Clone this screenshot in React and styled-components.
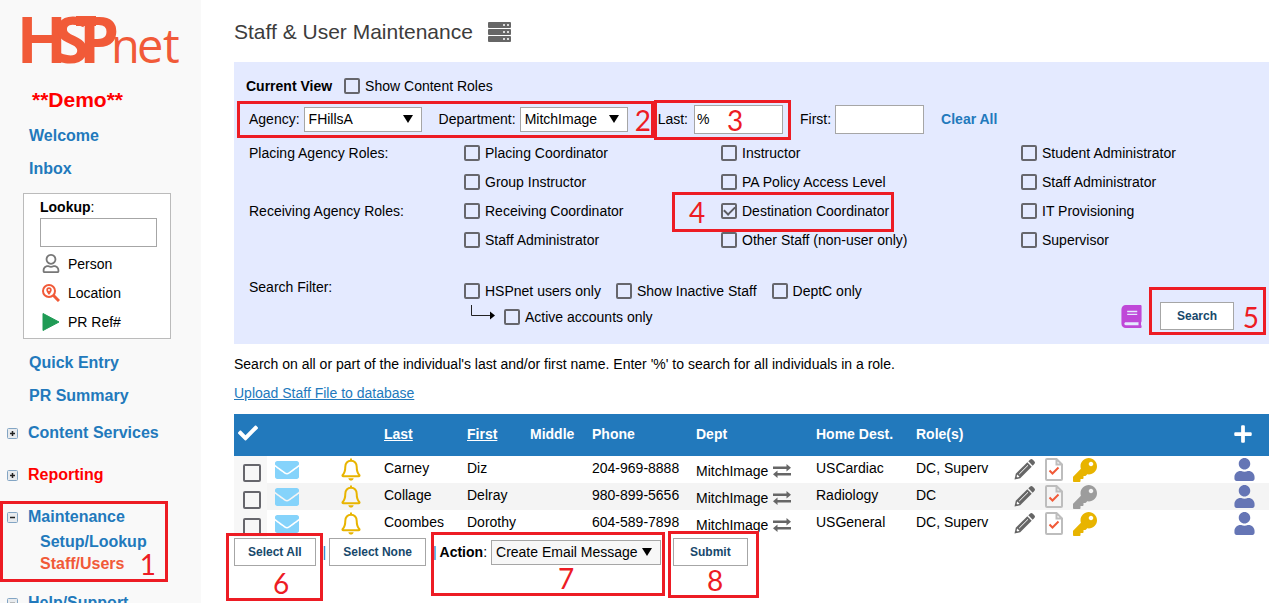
import styled, { createGlobalStyle } from "styled-components";
import { FaBook, FaCheck, FaEnvelope, FaKey, FaPlus, FaRegUser, FaUser } from "react-icons/fa";

const GlobalStyle = createGlobalStyle`
  :root {
    --blue: #2279bc;
    --orange: #f15a38;
    --mark: #ed1c24;
    --panel: #e4eaff;
    --line: #a6a6a6;
    --text-sm: 12px;
    --text-md: 14px;
    --text-nav: 16px;
  }

  * {
    box-sizing: border-box;
  }

  body {
    margin: 0;
    overflow: hidden;
    background: #fff;
    color: #000;
    font-family: "Liberation Sans", Arial, sans-serif;
    font-size: var(--text-md);
  }

  input,
  select,
  button {
    font: inherit;
    color: inherit;
    margin: 0;
  }

  svg {
    display: block;
    flex: none;
  }
`;

const Page = styled.div`
  position: relative;
  display: grid;
  grid-template-columns: 201px 1fr;
  height: 100vh;
  overflow: hidden;
`;

/* ---------- sidebar ---------- */

const Sidebar = styled.aside`
  background: #f9f9f9;
  overflow: hidden;
`;

const Demo = styled.p`
  margin: 8px 0 7px 32px;
  font-size: 21px;
  font-weight: bold;
  line-height: 24px;
  color: #f00;
`;

const NavLink = styled.a`
  display: block;
  padding-left: 29px;
  font-size: var(--text-nav);
  font-weight: bold;
  line-height: 33px;
  text-decoration: none;
  color: var(--blue);
`;

const LookupBox = styled.section`
  width: 148px;
  height: 146px;
  margin: 8px 0 7px 23px;
  padding: 4px 13px 0 16px;
  border: 1px solid #bbb;
  background: #fff;
`;

const LookupLabel = styled.label`
  display: block;
  margin-bottom: 2px;
  line-height: 18px;
`;

const TextInput = styled.input`
  width: ${(props) => props.$width};
  height: 29px;
  padding: 0 2px;
  border: 1px solid var(--line);
  border-radius: 0;
  background: #fff;
`;

const LookupList = styled.ul`
  margin: 2px 0 0;
  padding: 0;
  list-style: none;
`;

const LookupItem = styled.li`
  display: flex;
  align-items: center;
  gap: 8px;
  height: 29px;
  padding-left: 2px;

  svg {
    width: 18px;
  }
`;

const Tree = styled.ul`
  display: flex;
  flex-direction: column;
  gap: 20px;
  margin: 10px 0 0;
  padding: 0;
  list-style: none;
`;

const TreeRow = styled.div`
  display: flex;
  align-items: center;
  gap: 10px;
  padding-left: 7px;
`;

const TreeLink = styled.a`
  display: block;
  font-size: var(--text-nav);
  font-weight: bold;
  line-height: 22px;
  text-decoration: none;
  color: ${(props) => props.$color || "var(--blue)"};
`;

const SubTree = styled.ul`
  margin: 3px 0 -3px;
  padding-left: 40px;
  list-style: none;
`;

/* ---------- main column ---------- */

const Main = styled.main`
  min-width: 0;
  padding: 18px 10px 0 33px;
`;

const TitleRow = styled.header`
  display: flex;
  align-items: center;
  gap: 15px;
  height: 27px;
  margin-bottom: 17px;
`;

const Title = styled.h1`
  margin: 0;
  font-size: 21px;
  font-weight: normal;
  line-height: 27px;
  color: #3c3c3c;
`;

const Panel = styled.form`
  height: 282px;
  padding: 9px 0 0 12px;
  background: var(--panel);
`;

const PanelRow = styled.div`
  display: flex;
  align-items: center;
  height: ${(props) => props.$height || "29px"};
  gap: ${(props) => props.$gap || "0"};
  padding-left: ${(props) => props.$indent || "0"};
`;

const Field = styled.label`
  display: flex;
  align-items: center;
  gap: 4px;
`;

const NameField = styled(Field)`
  gap: 6px;
  margin-left: 13px;
`;

const SelectWrap = styled.span`
  position: relative;
  display: block;
  width: ${(props) => props.$width};

  &::after {
    content: "";
    position: absolute;
    top: 8px;
    right: 9px;
    border-top: 8px solid #000;
    border-left: 5px solid transparent;
    border-right: 5px solid transparent;
    pointer-events: none;
  }
`;

const SelectInput = styled.select`
  appearance: none;
  display: block;
  width: 100%;
  height: 25px;
  padding: 0 4px;
  border: 1px solid var(--line);
  border-radius: 0;
  background: ${(props) => props.$background || "#fff"};
`;

const CheckInput = styled.input`
  appearance: none;
  flex: none;
  display: grid;
  place-items: center;
  width: ${(props) => props.$size || "16px"};
  height: ${(props) => props.$size || "16px"};
  border: 2px solid #66666c;
  border-radius: 2px;

  &:checked::after {
    content: "";
    width: 9px;
    height: 5px;
    margin-bottom: 3px;
    border-left: 2px solid #5c5c62;
    border-bottom: 2px solid #5c5c62;
    transform: rotate(-45deg);
  }
`;

const CheckLabel = styled.label`
  display: flex;
  align-items: center;
  gap: 5px;
  line-height: 18px;
`;

const RoleGrid = styled.div`
  display: grid;
  grid-template-columns: 215px 257fr 300fr 248fr;
  grid-auto-rows: 29px;
  align-items: center;
  padding-left: 3px;
`;

const FilterRow = styled.div`
  display: grid;
  grid-template-columns: 215px 1fr auto;
  align-items: start;
  margin-top: 25px;
  padding: 0 35px 0 3px;
`;

const FilterChecks = styled.div`
  padding-top: 3px;
`;

const FilterActions = styled.div`
  display: flex;
  align-items: center;
  gap: 17px;
  padding-top: 23px;
`;

const Button = styled.button`
  height: 28px;
  padding: 0 ${(props) => props.$pad || "13px"};
  border: 1px solid var(--line);
  border-radius: 0;
  background: #fff;
  color: #17486b;
  font-size: var(--text-sm);
  font-weight: bold;
`;

const ClearLink = styled.a`
  font-weight: bold;
  text-decoration: none;
  color: var(--blue);
`;

const Hint = styled.p`
  margin: 10px 0;
  line-height: 20px;
`;

const UploadLink = styled.a`
  display: block;
  width: fit-content;
  line-height: 19px;
  color: var(--blue);
`;

/* ---------- staff table ---------- */

const Table = styled.table`
  width: 100%;
  margin-top: 11px;
  border-collapse: collapse;
  table-layout: fixed;

  th,
  td {
    padding: 0;
    text-align: left;
    white-space: nowrap;
  }

  th {
    height: 42px;
    padding-bottom: 2px;
    background: var(--blue);
    color: #fff;
    line-height: 20px;
  }

  td {
    height: 27px;
    vertical-align: top;
    line-height: 25px;
  }

  tbody tr:nth-child(even) {
    background: #f4f4f4;
  }
`;

const Col = styled.col`
  width: ${(props) => props.$width || "auto"};
`;

const CheckHead = styled.th`
  && {
    padding: 0 0 5px 4px;
  }
`;

const CheckCell = styled.td`
  && {
    padding: 8px 0 0 9px;
    height: 27px;
    line-height: 0;
    background: linear-gradient(to right, #f7f7f7 33px, transparent 33px);
  }
`;

const SortLink = styled.a`
  color: inherit;
`;

const IconSet = styled.div`
  display: flex;
  align-items: center;
  gap: 10px;
  height: 27px;
`;

const DeptCell = styled.div`
  display: flex;
  align-items: center;
  gap: 5px;
  padding-top: 3px;
  line-height: 24px;
`;

const Footer = styled.footer`
  display: flex;
  align-items: center;
  height: 28px;
  margin-top: 1px;
`;

const Bar = styled.span`
  margin: 0 3px 0 7px;
  color: var(--blue);
`;

const ActionField = styled(Field)`
  margin-right: 12px;
`;

/* ---------- numbered callouts ---------- */

const Callout = styled.div`
  position: absolute;
  top: ${(props) => props.$top}px;
  left: ${(props) => (props.$right ? "auto" : `${props.$left}px`)};
  right: ${(props) => (props.$right ? `${props.$right}px` : "auto")};
  display: flex;
  justify-content: ${(props) => (props.$end ? "flex-end" : "flex-start")};
  align-items: ${(props) => (props.$low ? "flex-end" : "center")};
  width: ${(props) => props.$width}px;
  height: ${(props) => props.$height}px;
  padding-left: ${(props) => (props.$end ? 0 : props.$pad)}px;
  padding-right: ${(props) => (props.$end ? props.$pad : 0)}px;
  border: 3px solid var(--mark);
  color: var(--mark);
  font-family: Lato, sans-serif;
  font-size: 28px;
  line-height: 30px;
  pointer-events: none;
`;

const callouts = [
  { n: 1, top: 501, left: 0, width: 168, height: 81, pad: 9, end: true, low: true },
  { n: 2, top: 101, left: 237, width: 417, height: 37, pad: 0, end: true },
  { n: 3, top: 100, left: 654, width: 137, height: 40, pad: 70 },
  { n: 4, top: 192, left: 672, width: 222, height: 40, pad: 14 },
  { n: 5, top: 287, right: 13, width: 117, height: 48, pad: 4, end: true, low: true },
  { n: 6, top: 533, left: 226, width: 97, height: 68, pad: 44, low: true },
  { n: 7, top: 532, left: 431, width: 234, height: 64, pad: 124, low: true },
  { n: 8, top: 531, left: 668, width: 91, height: 67, pad: 36, low: true },
];

const Logo = () => (
  <svg width="201" height="80" viewBox="0 0 201 80" fill="#f15a38" role="img" aria-label="HSPnet">
    <rect x="76" y="16" width="20" height="10" />
    <text x="18" y="63" fontFamily="Liberation Sans, Arial, sans-serif" fontWeight="bold" fontSize="66">
      H<tspan x="54 79" fontFamily="Open Sans, sans-serif" fontSize="64">SP</tspan>
    </text>
    <text x="111 137 163" y="63" fontFamily="Open Sans, sans-serif" fontSize="47">
      net
    </text>
  </svg>
);

const ServerIcon = () => (
  <svg width="23" height="22" viewBox="0 0 23 22">
    {[0, 7, 14].map((y) => (
      <g key={y}>
        <rect y={y + 1} width="23" height="6" rx="1" fill="#666" />
        <circle cx="16" cy={y + 4} r="1" fill="#fff" />
        <circle cx="20" cy={y + 4} r="1" fill="#fff" />
      </g>
    ))}
  </svg>
);

const SearchPinIcon = () => (
  <svg width="18" height="18" viewBox="0 0 18 18" fill="none" stroke="#f15a38">
    <circle cx="7" cy="7" r="6" strokeWidth="2" />
    <path d="M11.5 11.5 17 17" strokeWidth="3" />
    <path
      d="M7 11C5.200 8.600 4.300 7.300 4.300 6a2.700 2.700 0 0 1 5.400 0C9.700 7.300 8.800 8.600 7 11zM7 5a1 1 0 1 0 0 2 1 1 0 0 0 0-2z"
      fill="#f15a38"
      fillRule="evenodd"
      stroke="none"
    />
  </svg>
);

const PlayIcon = () => (
  <svg width="18" height="18" viewBox="0 0 18 18">
    <path d="M1 0.500 17 9 1 17.500z" fill="#1f9b55" stroke="#1f9b55" strokeLinejoin="round" />
  </svg>
);

const TreeToggle = ({ open }) => (
  <svg width="11" height="11" viewBox="0 0 11 11">
    <rect x="0.500" y="0.500" width="10" height="10" rx="1" fill="#e8ebee" stroke="#83a5c4" />
    <path d={open ? "M3 5.500h5" : "M3 5.500h5M5.500 3v5"} stroke="#222" strokeWidth="1.500" />
  </svg>
);

const ElbowArrow = () => (
  <svg width="25" height="26" viewBox="0 0 25 26">
    <path d="M1.500 1v10.500H21" fill="none" stroke="#222" />
    <path d="M20 7.500 25 11.500 20 15.500z" fill="#000" />
  </svg>
);

const BellIcon = () => (
  <svg width="20" height="23" viewBox="0 0 20 23" fill="none" stroke="#e8b400">
    <path
      d="M10 2.800c-3.600 0-5.700 2.600-5.700 6 0 4.700-1 6.600-2.600 8.200-.5.600-.2 1.300.6 1.300h15.400c.8 0 1.100-.7.6-1.300-1.600-1.600-2.600-3.500-2.600-8.200 0-3.400-2.100-6-5.700-6z"
      strokeWidth="2"
    />
    <path d="M10 0.500v2.500" strokeWidth="2" />
    <path d="M7.300 20.300h5.400c-.4 1.500-1.400 2.300-2.700 2.300s-2.300-.8-2.700-2.300z" fill="#e8b400" stroke="none" />
  </svg>
);

const PencilIcon = () => (
  <svg width="21" height="21" viewBox="0 0 21 21">
    <path d="M14.300 2.300 16 .7a2 2 0 0 1 2.800 0l1.500 1.500a2 2 0 0 1 0 2.800l-1.600 1.700z" fill="#666" />
    <path d="M13.300 3.300 17.700 7.700 6.200 19.200 0.500 20.500 1.800 14.800z" fill="#666" />
    <path d="M3.200 15.500 5.500 17.800 3.600 18.400 2.600 17.400z" fill="#fff" />
    <path d="M14 6.300 5.200 15.100" stroke="#fff" />
  </svg>
);

const SwapIcon = () => (
  <svg width="18" height="14" viewBox="0 0 18 14" fill="#666">
    <path d="M0 2.500h13.500V0L18 3.800 13.500 7.500V5H0zM18 9H4.500V6.500L0 10.300 4.500 14v-2.500H18z" />
  </svg>
);

const FileCheckIcon = () => (
  <svg width="18" height="23" viewBox="0 0 18 23" fill="none">
    <path
      d="M2 1h9.500L17 6.500V21a1 1 0 0 1-1 1H2a1 1 0 0 1-1-1V2a1 1 0 0 1 1-1zM11.500 1v5.500H17"
      stroke="#bdbdbd"
      strokeWidth="2"
    />
    <path d="m4.500 12.500 3 3 6-6" stroke="#f15a38" strokeWidth="2" />
  </svg>
);

const Select = ({ width, value, background }) => (
  <SelectWrap $width={width}>
    <SelectInput defaultValue={value} $background={background}>
      <option>{value}</option>
    </SelectInput>
  </SelectWrap>
);

const Check = ({ label, checked }) => (
  <CheckLabel>
    <CheckInput type="checkbox" defaultChecked={checked} />
    {label}
  </CheckLabel>
);

const roleRows = [
  ["Placing Agency Roles:", "Placing Coordinator", "Instructor", "Student Administrator"],
  ["", "Group Instructor", "PA Policy Access Level", "Staff Administrator"],
  ["Receiving Agency Roles:", "Receiving Coordinator", "Destination Coordinator", "IT Provisioning"],
  ["", "Staff Administrator", "Other Staff (non-user only)", "Supervisor"],
];

const staff = [
  { last: "Carney", first: "Diz", phone: "204-969-8888", dest: "USCardiac", roles: "DC, Superv", active: true },
  { last: "Collage", first: "Delray", phone: "980-899-5656", dest: "Radiology", roles: "DC", active: false },
  { last: "Coombes", first: "Dorothy", phone: "604-589-7898", dest: "USGeneral", roles: "DC, Superv", active: true },
];

const columns = ["41px", "66px", "43px", "83px", "63px", "62px", "104px", "120px", "100px", "98px", "", "36px"];

const SideNav = () => (
  <Sidebar>
    <Logo />
    <Demo>**Demo**</Demo>
    <NavLink href="#welcome">Welcome</NavLink>
    <NavLink href="#inbox">Inbox</NavLink>
    <LookupBox>
      <LookupLabel htmlFor="lookup">
        <b>Lookup</b>:
      </LookupLabel>
      <TextInput id="lookup" type="text" $width="117px" />
      <LookupList>
        <LookupItem>
          <FaRegUser size={19} color="#777" />
          Person
        </LookupItem>
        <LookupItem>
          <SearchPinIcon />
          Location
        </LookupItem>
        <LookupItem>
          <PlayIcon />
          PR Ref#
        </LookupItem>
      </LookupList>
    </LookupBox>
    <NavLink href="#quick">Quick Entry</NavLink>
    <NavLink href="#summary">PR Summary</NavLink>
    <Tree>
      <li>
        <TreeRow>
          <TreeToggle />
          <TreeLink href="#content">Content Services</TreeLink>
        </TreeRow>
      </li>
      <li>
        <TreeRow>
          <TreeToggle />
          <TreeLink href="#reporting" $color="#f00">Reporting</TreeLink>
        </TreeRow>
      </li>
      <li>
        <TreeRow>
          <TreeToggle open />
          <TreeLink href="#maintenance">Maintenance</TreeLink>
        </TreeRow>
        <SubTree>
          <li>
            <TreeLink href="#setup">Setup/Lookup</TreeLink>
          </li>
          <li>
            <TreeLink href="#staff" $color="var(--orange)">Staff/Users</TreeLink>
          </li>
        </SubTree>
      </li>
      <li>
        <TreeRow>
          <TreeToggle open />
          <TreeLink href="#help">Help/Support</TreeLink>
        </TreeRow>
      </li>
    </Tree>
  </Sidebar>
);

const SearchPanel = () => (
  <Panel onSubmit={(e) => e.preventDefault()}>
    <PanelRow $gap="12px">
      <b>Current View</b>
      <Check label="Show Content Roles" />
    </PanelRow>
    <PanelRow $height="38px" $gap="17px" $indent="3px">
      <Field>
        Agency:
        <Select width="118px" value="FHillsA" />
      </Field>
      <Field>
        Department:
        <Select width="108px" value="MitchImage" />
      </Field>
      <NameField>
        Last:
        <TextInput type="text" defaultValue="%" $width="89px" />
      </NameField>
      <Field>
        First:
        <TextInput type="text" $width="89px" />
      </Field>
      <ClearLink href="#clear">Clear All</ClearLink>
    </PanelRow>
    <RoleGrid>
      {roleRows.map(([heading, ...roles], i) => [
        <span key={`h${i}`}>{heading}</span>,
        ...roles.map((role) => (
          <Check key={`${i}${role}`} label={role} checked={role === "Destination Coordinator"} />
        )),
      ])}
    </RoleGrid>
    <FilterRow>
      <span>Search Filter:</span>
      <FilterChecks>
        <PanelRow $height="18px" $gap="15px">
          <Check label="HSPnet users only" />
          <Check label="Show Inactive Staff" />
          <Check label="DeptC only" />
        </PanelRow>
        <PanelRow $height="34px" $gap="9px" $indent="6px">
          <ElbowArrow />
          <Check label="Active accounts only" />
        </PanelRow>
      </FilterChecks>
      <FilterActions>
        <FaBook size={23} color="#bf48d8" />
        <Button type="submit" $pad="16px">Search</Button>
      </FilterActions>
    </FilterRow>
  </Panel>
);

const StaffTable = () => (
  <Table>
    <colgroup>
      {columns.map((width, i) => (
        <Col key={i} $width={width} />
      ))}
    </colgroup>
    <thead>
      <tr>
        <CheckHead>
          <FaCheck size={20} aria-label="Selected" />
        </CheckHead>
        <th />
        <th />
        <th>
          <SortLink href="#last">Last</SortLink>
        </th>
        <th>
          <SortLink href="#first">First</SortLink>
        </th>
        <th>Middle</th>
        <th>Phone</th>
        <th>Dept</th>
        <th>Home Dest.</th>
        <th>Role(s)</th>
        <th />
        <th>
          <FaPlus size={20} aria-label="Add" />
        </th>
      </tr>
    </thead>
    <tbody>
      {staff.map((person) => (
        <tr key={person.last}>
          <CheckCell>
            <CheckInput type="checkbox" $size="18px" aria-label={`Select ${person.last}`} />
          </CheckCell>
          <td>
            <IconSet>
              <FaEnvelope size={24} color="#85d3fb" />
            </IconSet>
          </td>
          <td>
            <IconSet>
              <BellIcon />
            </IconSet>
          </td>
          <td>{person.last}</td>
          <td>{person.first}</td>
          <td />
          <td>{person.phone}</td>
          <td>
            <DeptCell>
              MitchImage
              <SwapIcon />
            </DeptCell>
          </td>
          <td>{person.dest}</td>
          <td>{person.roles}</td>
          <td>
            <IconSet>
              <PencilIcon />
              <FileCheckIcon />
              <FaKey size={24} color={person.active ? "#e8b400" : "#9c9c9c"} />
            </IconSet>
          </td>
          <td>
            <IconSet>
              <FaUser size={23} color="#6575b5" />
            </IconSet>
          </td>
        </tr>
      ))}
    </tbody>
  </Table>
);

const App = () => {
  return (
    <>
      <GlobalStyle />
      <Page>
        <SideNav />
        <Main>
          <TitleRow>
            <Title>Staff &amp; User Maintenance</Title>
            <ServerIcon />
          </TitleRow>
          <SearchPanel />
          <Hint>
            Search on all or part of the individual's last and/or first name. Enter '%' to search for all
            individuals in a role.
          </Hint>
          <UploadLink href="#upload">Upload Staff File to database</UploadLink>
          <StaffTable />
          <Footer>
            <Button type="button">Select All</Button>
            <Bar>|</Bar>
            <Button type="button">Select None</Button>
            <Bar>|</Bar>
            <ActionField>
              <span>
                <b>Action</b>:
              </span>
              <Select width="170px" value="Create Email Message" background="#f7f7f7" />
            </ActionField>
            <Button type="button" $pad="16px">Submit</Button>
          </Footer>
        </Main>
        {callouts.map((c) => (
          <Callout
            key={c.n}
            $top={c.top}
            $left={c.left}
            $right={c.right}
            $width={c.width}
            $height={c.height}
            $pad={c.pad}
            $end={c.end}
            $low={c.low}
          >
            {c.n}
          </Callout>
        ))}
      </Page>
    </>
  );
};

export default App;
